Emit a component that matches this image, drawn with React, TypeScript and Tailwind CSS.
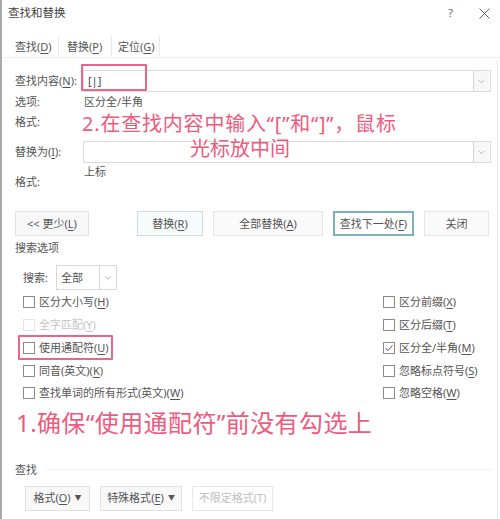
import { ChevronDown } from "lucide-react";

const pink = "text-[#ef5a7d]";

function U({ k }: { k: string }) {
  return (
    <>
      (<span className="underline underline-offset-2">{k}</span>)
    </>
  );
}

function Box({ checked, disabled }: { checked?: boolean; disabled?: boolean }) {
  return (
    <span
      className={`w-[12px] h-[12px] shrink-0 border flex items-center justify-center ${
        disabled ? "border-[#e4e4e4]" : "border-[#8a8a8a]"
      } bg-white`}
    >
      {checked && (
        <svg width="10" height="10" viewBox="0 0 10 10">
          <path d="M1.5 5.2 L4 7.6 L8.6 2.2" fill="none" stroke="#555" strokeWidth="1" />
        </svg>
      )}
    </span>
  );
}

function Check({ label, k, checked, disabled }: { label: string; k: string; checked?: boolean; disabled?: boolean }) {
  return (
    <div className="h-[22.75px] flex items-center gap-[4px]">
      <Box checked={checked} disabled={disabled} />
      <span className={disabled ? "text-[#c4c4c4]" : ""}>
        {label}
        <U k={k} />
      </span>
    </div>
  );
}

function Btn({ w, children, cls = "" }: { w: string; children: React.ReactNode; cls?: string }) {
  return (
    <div className={`${w} h-[25px] flex items-center justify-center border ${cls}`}>{children}</div>
  );
}

function Combo({ cls }: { cls: string }) {
  return (
    <div className={`${cls} h-[22px] border border-[#dcdcdc] flex items-center justify-end bg-white`}>
      <div className="w-[16px] h-[20px] border-l border-[#d4d4d4] bg-[#f7f7f7] flex items-center justify-center mr-[1px]">
        <ChevronDown size={9} strokeWidth={1.5} color="#8a8a8a" />
      </div>
    </div>
  );
}

export default function App() {
  return (
    <div className="w-[500px] h-[519px] bg-white relative overflow-hidden border-l-2 border-[#a9a9a9] font-['Noto_Sans','Noto_Sans_CJK_SC',sans-serif] text-[11px] text-[#555] leading-[18px]">
      <div className="absolute right-[2px] top-[60px] bottom-0 w-px bg-[#ececec]" />
      {/* title bar */}
      <div className="h-[36px] flex items-start pt-[4px] pl-[6px] pr-[10px]">
        <span className="text-[11.5px] text-[#444]">查找和替换</span>
        <span className="ml-auto mr-[26px] text-[11px] text-[#666]">?</span>
        <svg width="11" height="11" viewBox="0 0 11 11" className="mt-[4px]">
          <path d="M0.5 0.5 L10.5 10.5 M10.5 0.5 L0.5 10.5" stroke="#666" strokeWidth="1" />
        </svg>
      </div>
      {/* tabs */}
      <div className="h-[22px] flex items-center border-b border-[#efefef] pl-[13px] text-[#555]">
        <span className="w-[43px]">
          查找<U k="D" />
        </span>
        <span className="h-full border-l border-r border-[#eaeaea] w-[54px] pl-[8px] flex items-center">
          替换<U k="P" />
        </span>
        <span className="h-full border-r border-[#eaeaea] w-[48px] pl-[6px] flex items-center">
          定位<U k="G" />
        </span>
      </div>

      <div className="pl-[13px] pr-[8px] relative">
        {/* find */}
        <div className="mt-[12px] flex items-center">
          <span className="w-[68px]">
            查找内容<U k="N" />:
          </span>
          <div className="relative flex-1">
            <Combo cls="w-[408px]" />
            <span className="absolute left-[5px] top-[4px] text-[11px] leading-[14px] text-[#444]">[|]</span>
          </div>
        </div>
        <div className="h-[20px] flex items-center">
          <span className="w-[69px]">选项:</span>
          <span>区分全/半角</span>
        </div>
        <div className="h-[20px] flex items-center">
          <span className="w-[69px]">格式:</span>
        </div>

        {/* replace */}
        <div className="mt-[9px] flex items-center">
          <span className="w-[68px]">
            替换为<U k="I" />:
          </span>
          <Combo cls="w-[408px]" />
        </div>
        <div className="h-[36px] flex items-start">
          <span className="w-[69px] pt-[9px] leading-[20px]">格式:</span>
          <span className="pt-[0px] leading-[18px]">上标</span>
        </div>

        {/* buttons */}
        <div className="mt-[12px] flex items-center gap-[10px]">
          <Btn w="w-[74px]" cls="border-[#e2e2e2] bg-[#f8f8f8]">
            &lt;&lt; 更少<U k="L" />
          </Btn>
          <Btn w="w-[66px] ml-[38px]" cls="border-[#d2dcde] bg-[#f6fbfb]">
            替换<U k="R" />
          </Btn>
          <Btn w="w-[110px]" cls="border-[#e6e6e6] bg-[#fafafa]">
            全部替换<U k="A" />
          </Btn>
          <Btn w="w-[81px]" cls="border-2 border-[#7bb3bb] bg-white">
            查找下一处<U k="F" />
          </Btn>
          <Btn w="w-[65px]" cls="border-[#e6e6e6] bg-[#fafafa]">
            关闭
          </Btn>
        </div>

        {/* search options */}
        <div className="mt-[2px] h-[20px] flex items-center">搜索选项</div>
        <div className="mt-[7px] flex items-center pl-[8px]">
          <span className="w-[33px]">搜索:</span>
          <div className="w-[61px] h-[25px] border border-[#d8d8d8] flex items-center bg-white">
            <span className="pl-[4px] flex-1">全部</span>
            <div className="w-[17px] h-full border-l border-[#d8d8d8] flex items-center justify-center">
              <ChevronDown size={10} strokeWidth={1.5} color="#8a8a8a" />
            </div>
          </div>
        </div>

        <div className="mt-[1px] flex pl-[8px]">
          <div className="w-[360px]">
            <Check label="区分大小写" k="H" />
            <Check label="全字匹配" k="Y" disabled />
            <Check label="使用通配符" k="U" />
            <Check label="同音(英文)" k="K" />
            <Check label="查找单词的所有形式(英文)" k="W" />
          </div>
          <div>
            <Check label="区分前缀" k="X" />
            <Check label="区分后缀" k="T" />
            <Check label="区分全/半角" k="M" checked />
            <Check label="忽略标点符号" k="S" />
            <Check label="忽略空格" k="W" />
          </div>
        </div>

        {/* find section */}
        <div className="mt-[55px] h-[20px] flex items-center">
          <span>查找</span>
          <div className="flex-1 ml-[8px] h-px bg-[#f2f2f2]" />
        </div>
        <div className="mt-[6px] flex items-center gap-[10px] pl-[10px]">
          <Btn w="w-[65px]" cls="border-[#e2e2e2] bg-[#f8f8f8]">
            格式<U k="O" />
            <span className="ml-[4px] text-[7px]">▼</span>
          </Btn>
          <Btn w="w-[82px]" cls="border-[#e2e2e2] bg-[#f8f8f8]">
            特殊格式<U k="E" />
            <span className="ml-[4px] text-[7px]">▼</span>
          </Btn>
          <Btn w="w-[81px]" cls="border-[#e8e8e8] bg-white text-[#c0c0c0]">
            不限定格式(T)
          </Btn>
        </div>
      </div>

      {/* annotations */}
      <div className="absolute left-[79px] top-[64px] w-[66px] h-[27px] border-2 border-[#e8668a] rounded-[1px]" />
      <div className="absolute left-[16px] top-[335px] w-[95px] h-[25px] border-2 border-[#e8668a] rounded-[1px]" />
      <div className={`absolute left-[80px] top-[112px] text-[20px] leading-[24px] tracking-[0.8px] whitespace-nowrap ${pink}`}>
        2.在查找内容中输入“[”和“]”，鼠标
      </div>
      <div className={`absolute left-[188px] top-[137px] text-[20px] leading-[24px] whitespace-nowrap ${pink}`}>
        光标放中间
      </div>
      <div className={`absolute left-[14px] top-[408px] text-[24px] leading-[30px] tracking-[0.4px] whitespace-nowrap ${pink}`}>
        1.确保“使用通配符”前没有勾选上
      </div>
    </div>
  );
}
